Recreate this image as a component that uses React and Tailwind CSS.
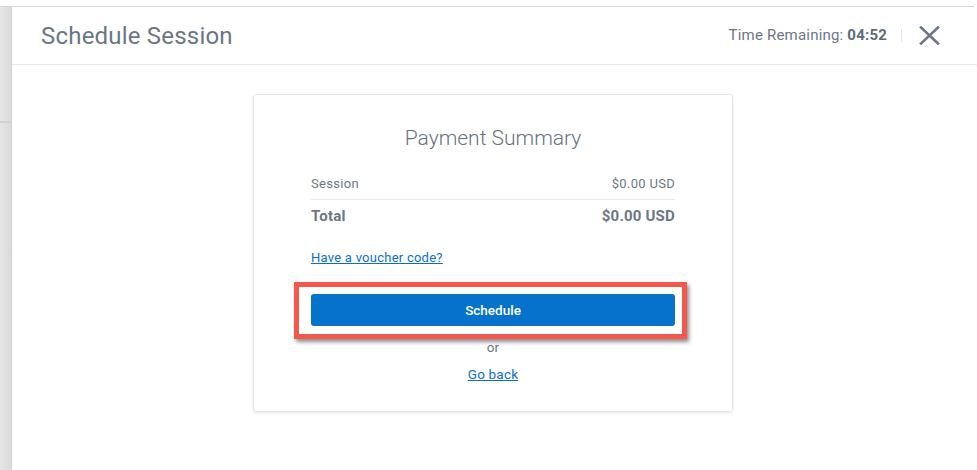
import React from 'react';

const font = { fontFamily: 'Roboto, "Liberation Sans", sans-serif' };

function CloseIcon() {
  return (
    <svg width="21" height="19" viewBox="0 0 21 19" className="block">
      <path d="M2 1.5 L19 17.5 M19 1.5 L2 17.5" stroke="#6b7785" strokeWidth="2.6" strokeLinecap="square" fill="none" />
    </svg>
  );
}

export default function App() {
  return (
    <div className="w-[977px] h-[470px] bg-white overflow-hidden flex flex-col" style={font}>
      <div className="h-[6px] shrink-0 bg-white" />
      <div className="h-px shrink-0 bg-[#d3d9dd] mr-[3px]" />
      <div className="flex flex-1 min-h-0">
        {/* side strip */}
        <div className="w-[12px] shrink-0 flex flex-col bg-gradient-to-r from-[#e6e6e6] to-[#dadada] border-r border-[#d2d2d2]">
          <div className="h-[114px]" />
          <div className="h-[2px] bg-[#cdd3d3]" />
        </div>

        <div className="flex-1 flex flex-col">
          {/* header */}
          <div className="h-[58px] shrink-0 flex items-center justify-between pl-[29px] pr-[37px] border-b border-[#e4eaed]">
            <h1 className="text-[24px] leading-[30px] text-[#6a7683] font-normal tracking-[0.2px] mt-[1px]">
              Schedule Session
            </h1>
            <div className="flex items-center">
              <span className="text-[15px] text-[#6b7785] tracking-[0.2px]">
                Time Remaining: <span className="font-bold text-[#5f6b78]">04:52</span>
              </span>
              <div className="w-px h-[13px] bg-[#e2e6e9] ml-[14px] mr-[17px]" />
              <CloseIcon />
            </div>
          </div>

          {/* card */}
          <div className="mt-[29px] ml-[241px] w-[480px] border border-[#e2e7e9] rounded-[3px] shadow-[0_1px_3px_rgba(0,0,0,0.10)] px-[57px] pt-[29px] pb-[28px]">
            <h2 className="text-center text-[21px] leading-[28px] font-light text-[#67727f]">
              Payment Summary
            </h2>

            <div className="mt-[23px] flex justify-between text-[13px] leading-[18px] text-[#6b7785] tracking-[0.3px] pb-[6px] border-b border-[#e6ebed]">
              <span>Session</span>
              <span>$0.00 USD</span>
            </div>
            <div className="pt-[6px] flex justify-between text-[15px] leading-[20px] font-bold text-[#6b7785] tracking-[0.2px]">
              <span>Total</span>
              <span>$0.00 USD</span>
            </div>

            <div className="mt-[23px] text-[13px] leading-[18px] tracking-[0.25px]">
              <a href="#" className="text-[#0b6fc6] underline">Have a voucher code?</a>
            </div>

            <div className="relative mt-[27px]">
              <button
                type="button"
                className="w-full h-[32px] rounded-[3px] bg-[#0672cb] text-white text-[13.5px] font-medium"
              >
                Schedule
              </button>
              {/* highlight annotation */}
              <div className="absolute -left-[17px] -right-[12px] -top-[12px] -bottom-[13px] border-[5px] border-[#f5574a] shadow-[2px_3px_4px_rgba(0,0,0,0.45)] pointer-events-none" />
            </div>

            <div className="mt-[12px] text-center text-[13.5px] leading-[18px] text-[#6b7785]">or</div>
            <div className="mt-[9px] text-center text-[13.5px] leading-[18px] tracking-[0.2px]">
              <a href="#" className="text-[#0b6fc6] underline">Go back</a>
            </div>
          </div>
        </div>
      </div>
    </div>
  );
}
